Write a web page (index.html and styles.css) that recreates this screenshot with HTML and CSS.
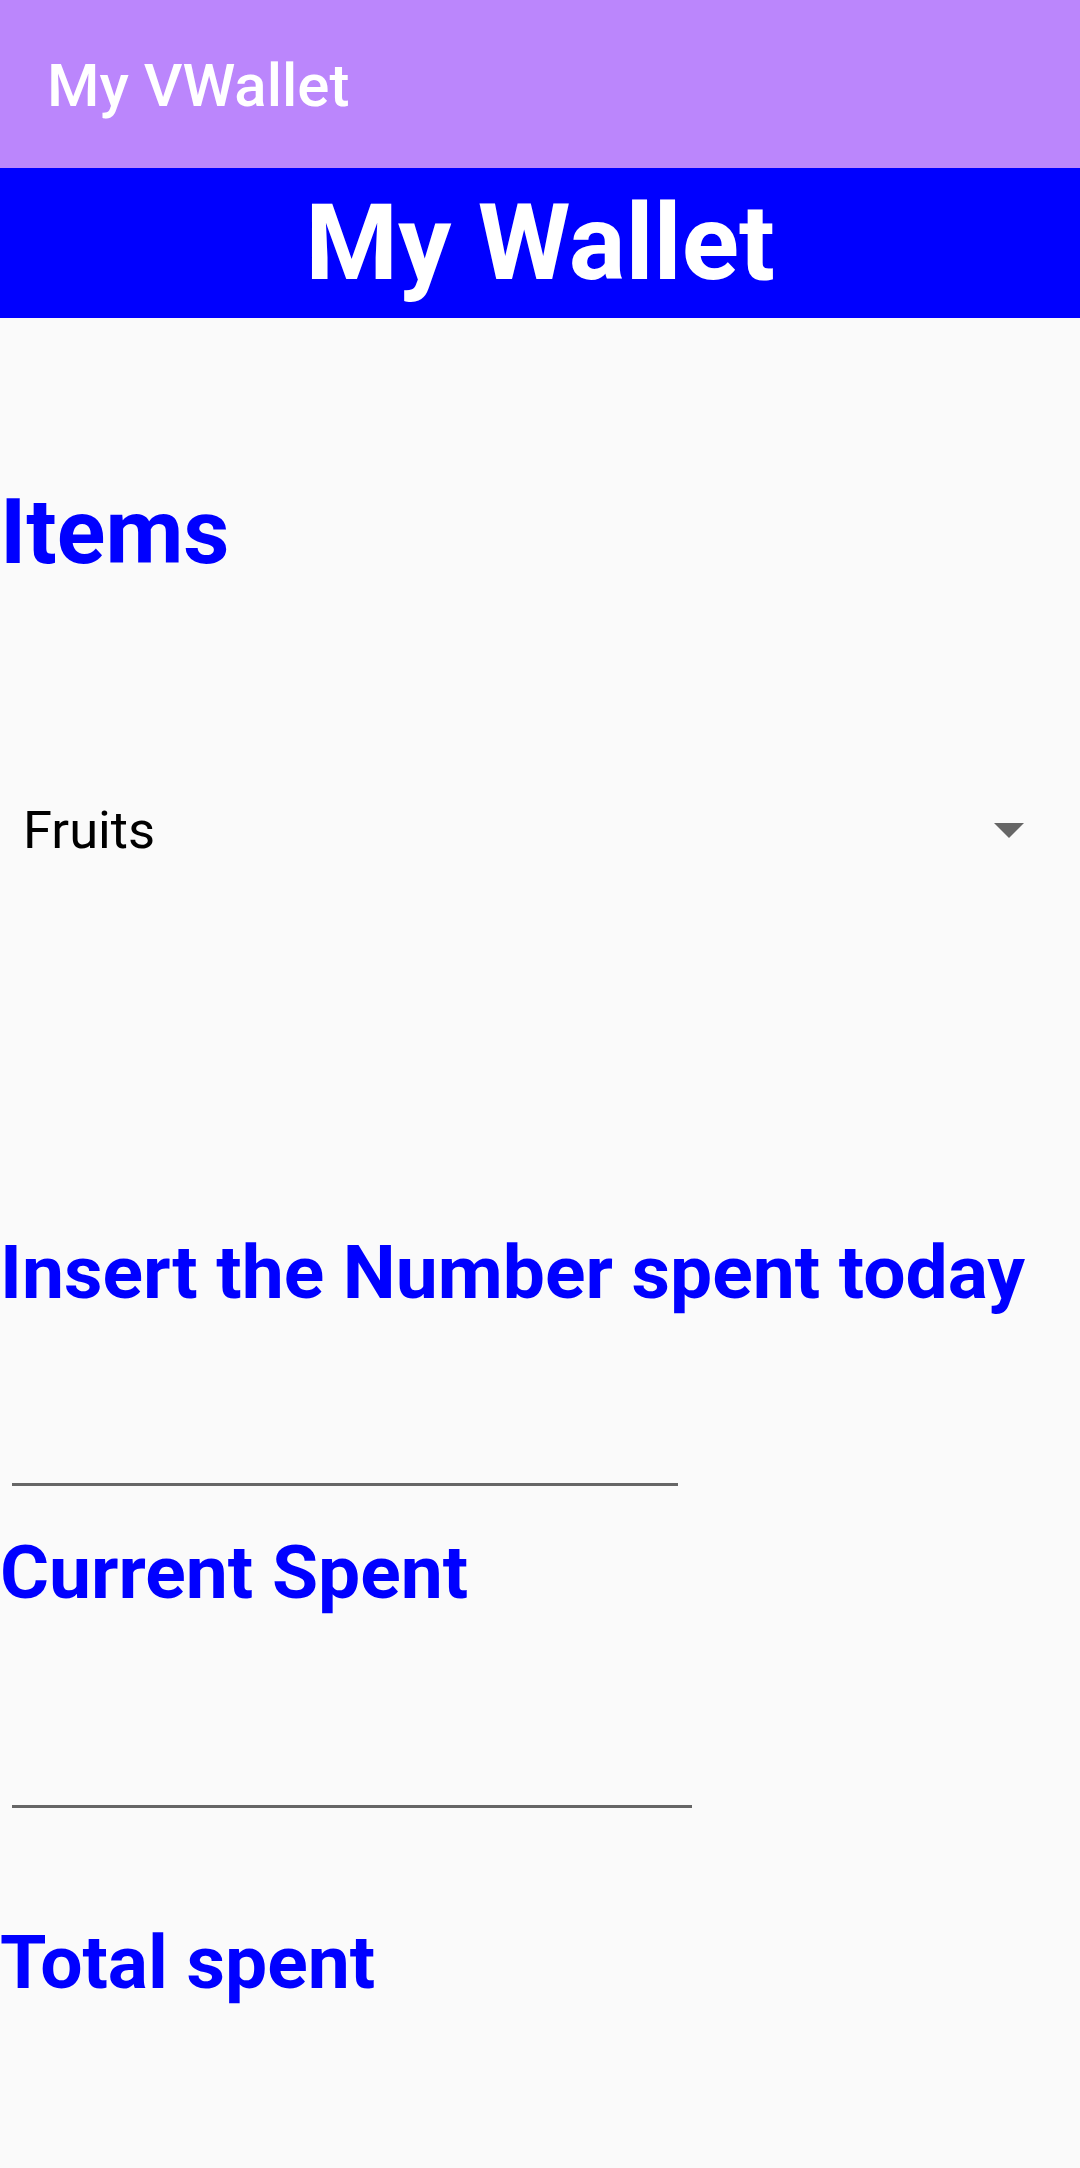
FILE: index.html
```html
<!DOCTYPE html>
<html lang="en">
<head>
<meta charset="utf-8">
<title>My VWallet</title>
<link rel="stylesheet" href="styles.css">
</head>
<body>
<div class="app">
  <header class="toolbar">My VWallet</header>
  <div class="banner">My Wallet</div>
  <main class="content">
    <h2 class="label label-items">Items</h2>
    <div class="spinner">
      <span class="spinner-text">Fruits</span>
      <svg class="spinner-arrow" width="30" height="15" viewBox="0 0 30 15"><path d="M0 0 L30 0 L15 15 Z" fill="#666666"/></svg>
    </div>
    <h2 class="label label-insert">Insert the Number spent today</h2>
    <div class="field field-insert"></div>
    <h2 class="label label-current">Current Spent</h2>
    <div class="field field-current"></div>
    <h2 class="label label-total">Total spent</h2>
  </main>
</div>
</body>
</html>
```

FILE: styles.css
```css
html, body {
  margin: 0;
  padding: 0;
}
body {
  background: #fafafa;
  font-family: Roboto, "Liberation Sans", sans-serif;
  width: 1080px;
  height: 2168px;
  overflow: hidden;
}
.app {
  display: flex;
  flex-direction: column;
}
.toolbar {
  box-sizing: border-box;
  height: 168px;
  background: #bb86fc;
  color: #ffffff;
  font-size: 60px;
  font-weight: 500;
  line-height: 1;
  padding: 56px 0 0 47px;
}
.banner {
  box-sizing: border-box;
  height: 150px;
  background: #0000ff;
  color: #ffffff;
  font-size: 106px;
  font-weight: 700;
  line-height: 1;
  text-align: center;
  padding-top: 22px;
}
.content {
  display: flex;
  flex-direction: column;
}
.label {
  margin: 0;
  color: #0000ff;
  font-weight: 700;
  line-height: 1;
}
.label-items {
  font-size: 90px;
  margin-top: 170px;
}
.spinner {
  display: flex;
  align-items: center;
  justify-content: space-between;
  margin-top: 226px;
  padding: 0 56px 0 23px;
  height: 52px;
}
.spinner-text {
  font-size: 52.5px;
  line-height: 1;
  color: #000000;
}
.spinner-arrow {
  display: block;
}
.label-insert {
  font-size: 75px;
  margin-top: 379px;
}
.field {
  height: 3px;
  background: #666666;
  margin-left: 12px;
}
.field-insert {
  width: 666px;
  margin-top: 173px;
}
.label-current {
  font-size: 75px;
  margin-top: 49px;
}
.field-current {
  width: 680px;
  margin-top: 195px;
}
.label-total {
  font-size: 75px;
  margin-top: 117px;
}
```
